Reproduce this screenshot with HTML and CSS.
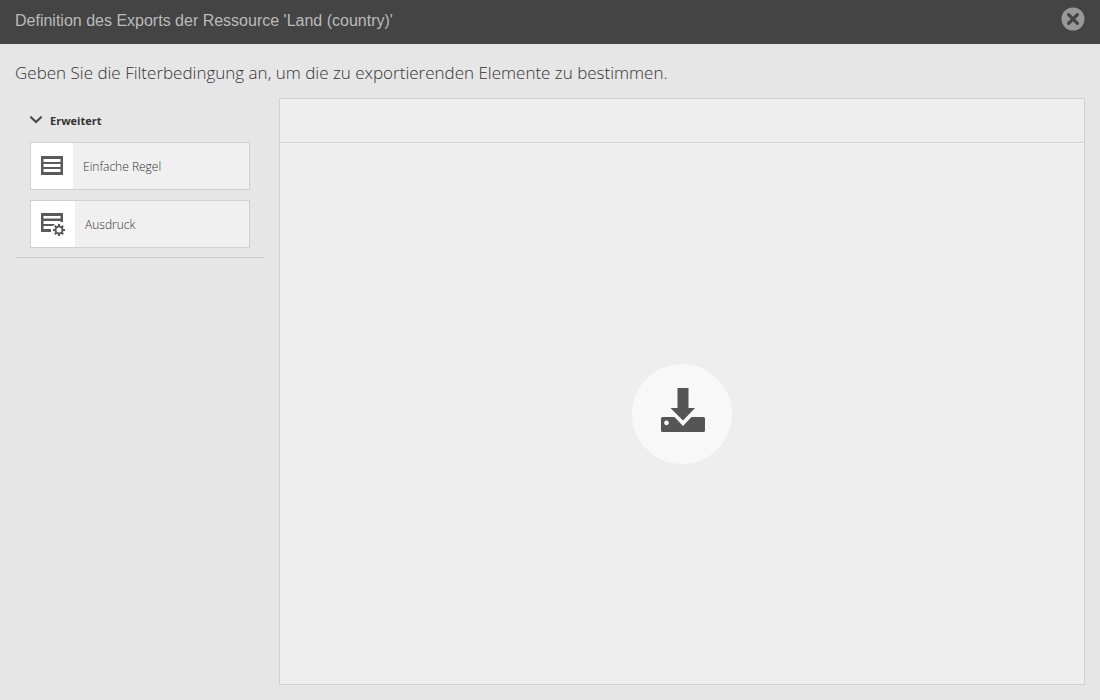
FILE: index.html
```html
<!DOCTYPE html>
<html lang="de">
<head>
<meta charset="utf-8">
<meta name="viewport" content="width=device-width, initial-scale=1">
<title>Definition des Exports</title>
<link rel="stylesheet" href="styles.css">
</head>
<body>
<header class="titlebar">
  <h1 class="title">Definition des Exports der Ressource 'Land (country)'</h1>
  <button class="close" type="button" aria-label="Schließen">
    <svg width="24" height="24" viewBox="0 0 24 24"><circle cx="12" cy="12" r="11.5" fill="#999"/><path d="M7.6 7.6l8.8 8.8M16.4 7.6l-8.8 8.8" stroke="#444" stroke-width="3.2" stroke-linecap="round"/></svg>
  </button>
</header>
<main class="content">
  <p class="intro">Geben Sie die Filterbedingung an, um die zu exportierenden Elemente zu bestimmen.</p>
  <div class="workspace">
    <aside class="palette">
      <button class="group" type="button" aria-expanded="true">
        <svg width="12" height="8" viewBox="0 0 12 8"><path d="M1 1.200l5 4.800 5-4.800" fill="none" stroke="#4b4b4b" stroke-width="2.2" stroke-linecap="round"/></svg>
        <span>Erweitert</span>
      </button>
      <button class="item" type="button">
        <span class="icon">
          <svg width="22" height="20" viewBox="0 0 22 20"><path fill="#5a5a5a" fill-rule="evenodd" d="M0 0h22v19H0zM2.500 3v3h17V3zM2.500 8v3h17V8zM2.500 13v3h17v-3z"/></svg>
        </span>
        <span class="label">Einfache Regel</span>
      </button>
      <button class="item" type="button">
        <span class="icon">
          <svg width="24" height="24" viewBox="0 0 24 24"><path fill="#5a5a5a" d="M0 1h22v9h-2.500V9h-17v3H14l-2 2H2.500v3H10v3H0zM2.500 4v2.500h17V4z" fill-rule="evenodd"/><circle cx="18" cy="18" r="3.500" fill="none" stroke="#5a5a5a" stroke-width="2"/><path d="M18 14.500V12M18 21.500V24M14.500 18H12M21.500 18H24M15.500 15.500l-1.700-1.700M20.500 15.500l1.700-1.700M15.500 20.500l-1.700 1.700M20.500 20.500l1.700 1.700" stroke="#5a5a5a" stroke-width="2"/></svg>
        </span>
        <span class="label">Ausdruck</span>
      </button>
    </aside>
    <section class="canvas">
      <div class="toolbar"></div>
      <div class="stage">
        <div class="drop">
          <svg width="44" height="44" viewBox="0 0 44 44"><path fill="#555" d="M16.500 0h11v20H34L22 32.500 9.500 20h7z"/><path fill="#555" fill-rule="evenodd" d="M1.500 29h12L22 38l8.500-9h12q1.500 0 1.500 1.500v12q0 1.500-1.500 1.500h-41Q0 44 0 42.500v-12Q0 29 1.500 29zM5.500 32.500a2.400 2.400 0 1 0 .01 0z"/></svg>
        </div>
      </div>
    </section>
  </div>
</main>
</body>
</html>
```
FILE: styles.css
```css
* { box-sizing: border-box; }

body {
  margin: 0;
  min-height: 100vh;
  display: flex;
  flex-direction: column;
  background: #e6e6e6;
  color: #333;
  font-family: "Open Sans", "Noto Sans", sans-serif;
}

button {
  margin: 0;
  padding: 0;
  border: 0;
  background: none;
  color: inherit;
  font: inherit;
  text-align: left;
  cursor: pointer;
}

svg { display: block; }

.titlebar {
  display: flex;
  align-items: flex-start;
  justify-content: space-between;
  height: 44px;
  padding: 7px 15px;
  background: #444;
}

.title {
  margin: 0;
  color: #bbb;
  font: 400 16px/28px "Liberation Sans", Arial, sans-serif;
}

.content {
  flex: 1;
  display: flex;
  flex-direction: column;
  padding: 15px;
}

.intro {
  margin: 0 0 11px;
  font-size: 17px;
  font-weight: 300;
  line-height: 28px;
}

.workspace {
  flex: 1;
  display: flex;
  align-items: stretch;
  gap: 14px;
}

.palette {
  flex: 0 0 250px;
  align-self: flex-start;
  display: flex;
  flex-direction: column;
  gap: 10px;
  padding: 10px 15px 9px;
  border-bottom: 1px solid #ccc;
}

.group {
  display: flex;
  align-items: center;
  gap: 8px;
  height: 24px;
  font-size: 11px;
  font-weight: 700;
}

.item {
  display: flex;
  height: 48px;
  border: 1px solid #d0d0d0;
  background: #f0f0f0;
}

.icon {
  display: flex;
  align-items: center;
  height: 100%;
  padding: 0 10px;
  background: #fff;
}

.label {
  align-self: center;
  padding-left: 10px;
  font-size: 12px;
  font-weight: 300;
}

.canvas {
  flex: 1;
  display: flex;
  flex-direction: column;
  border: 1px solid #d0d0d0;
  background: #eee;
}

.toolbar {
  height: 44px;
  border-bottom: 1px solid #d0d0d0;
}

.stage {
  flex: 1;
  display: flex;
  align-items: center;
  justify-content: center;
  border-top: 1px solid #f5f5f5;
}

.drop {
  display: flex;
  align-items: center;
  justify-content: center;
  width: 100px;
  height: 100px;
  padding: 0 0 8px 2px;
  border-radius: 50%;
  background: #f8f8f8;
}
```
